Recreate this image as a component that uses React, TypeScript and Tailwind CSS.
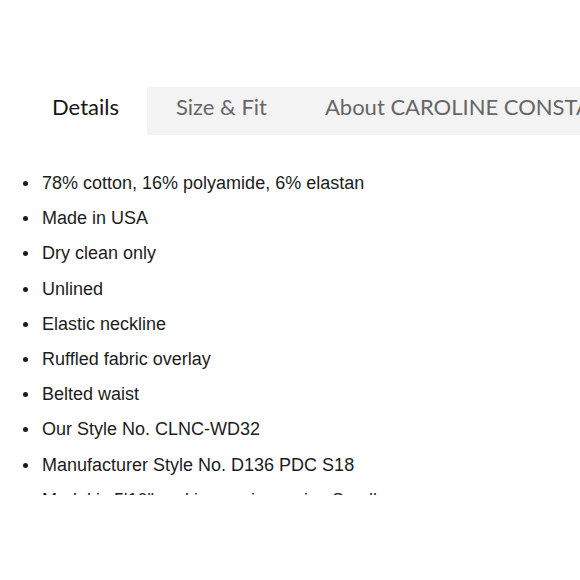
import React from "react";

const items = [
  "78% cotton, 16% polyamide, 6% elastan",
  "Made in USA",
  "Dry clean only",
  "Unlined",
  "Elastic neckline",
  "Ruffled fabric overlay",
  "Belted waist",
  "Our Style No. CLNC-WD32",
  "Manufacturer Style No. D136 PDC S18",
  "Model is 5'10\" and is wearing a size Small",
];

export default function App() {
  return (
    <div className="w-[580px] h-[580px] bg-white overflow-hidden">
      {/* Tab strip */}
      <div className="pt-[87px] pl-6 flex">
        <div className="flex h-[48px] bg-[#f3f3f3] whitespace-nowrap font-['Lato',sans-serif] text-[22px]">
          <div className="bg-white w-[123px] flex items-center justify-center pb-[10px] text-[#161616]">
            Details
          </div>
          <div className="px-[29px] flex items-center pb-[10px] text-[#666]">
            Size &amp; Fit
          </div>
          <div className="px-[29px] flex items-center pb-[10px] text-[#666]">
            About CAROLINE CONSTAS
          </div>
        </div>
      </div>

      {/* Bullet list, clipped like the screenshot */}
      <div className="mt-[31px] h-[329px] overflow-hidden">
        <ul className="font-['Liberation_Sans',Arial,sans-serif] text-[18px] text-[#1c1c1c] flex flex-col">
          {items.map((it) => (
            <li key={it} className="h-[35.2px] flex items-center pl-[23px] whitespace-nowrap">
              <span className="w-[5px] h-[5px] rounded-full bg-[#1c1c1c] mr-[14px]" />
              <span>{it}</span>
            </li>
          ))}
        </ul>
      </div>
    </div>
  );
}
